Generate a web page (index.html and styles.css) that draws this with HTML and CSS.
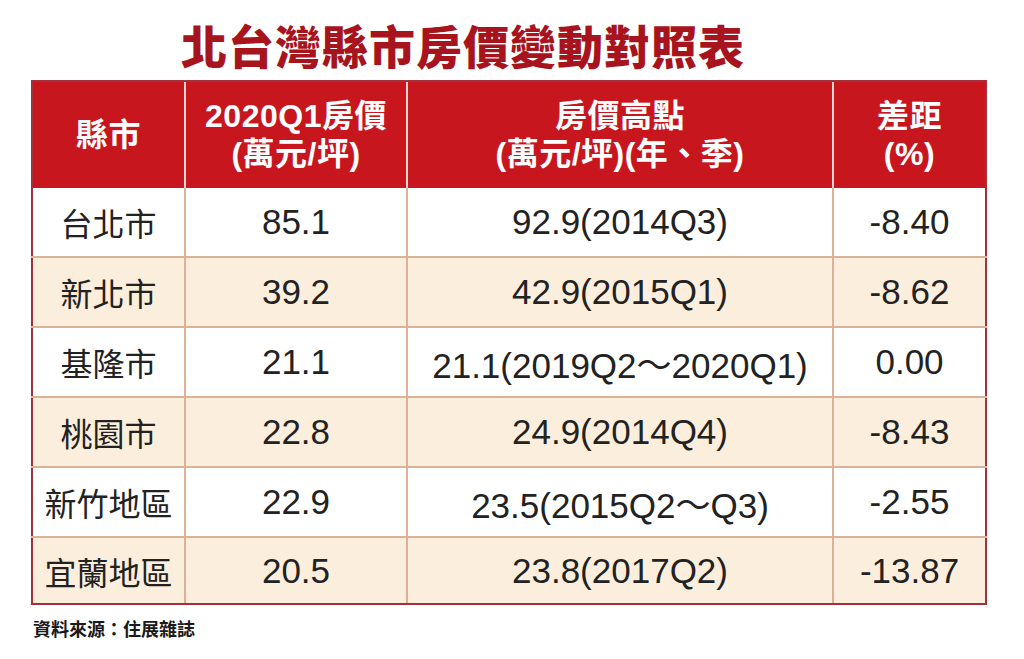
FILE: index.html
```html
<!DOCTYPE html>
<html lang="zh-Hant">
<head>
<meta charset="utf-8">
<title>北台灣縣市房價變動對照表</title>
<link rel="stylesheet" href="styles.css">
</head>
<body>
<div class="page">
  <h1 class="title">北台灣縣市房價變動對照表</h1>
  <table class="tbl">
    <colgroup>
      <col class="c1"><col class="c2"><col class="c3"><col class="c4">
    </colgroup>
    <thead>
      <tr>
        <th>縣市</th>
        <th>2020Q1房價<br>(萬元/坪)</th>
        <th>房價高點<br>(萬元/坪)(年、季)</th>
        <th>差距<br>(%)</th>
      </tr>
    </thead>
    <tbody>
      <tr><td class="city">台北市</td><td>85.1</td><td>92.9(2014Q3)</td><td>-8.40</td></tr>
      <tr class="alt"><td class="city">新北市</td><td>39.2</td><td>42.9(2015Q1)</td><td>-8.62</td></tr>
      <tr><td class="city">基隆市</td><td>21.1</td><td>21.1(2019Q2～2020Q1)</td><td>0.00</td></tr>
      <tr class="alt"><td class="city">桃園市</td><td>22.8</td><td>24.9(2014Q4)</td><td>-8.43</td></tr>
      <tr><td class="city">新竹地區</td><td>22.9</td><td>23.5(2015Q2～Q3)</td><td>-2.55</td></tr>
      <tr class="alt"><td class="city">宜蘭地區</td><td>20.5</td><td>23.8(2017Q2)</td><td>-13.87</td></tr>
    </tbody>
  </table>
  <p class="source">資料來源：住展雜誌</p>
</div>
</body>
</html>
```

FILE: styles.css
```css
html, body {
  margin: 0;
  padding: 0;
  background: #ffffff;
}
.page {
  padding: 0 0 0 31px;
  width: 954px;
  font-family: "Liberation Sans", "Noto Sans CJK TC", sans-serif;
}
.title {
  margin: 0;
  padding: 16px 0 0 150px;
  height: 80px;
  box-sizing: border-box;
  font-family: "Noto Sans CJK TC", sans-serif;
  font-weight: 900;
  font-size: 46px;
  line-height: 56px;
  letter-spacing: 1px;
  color: #a8141d;
}
.tbl {
  width: 954px;
  border-collapse: collapse;
  table-layout: fixed;
  border: 2px solid #a3303a;
}
.c1 { width: 153px; }
.c2 { width: 222px; }
.c3 { width: 426px; }
.c4 { width: 153px; }
.tbl th {
  background: #c8161f;
  color: #ffffff;
  height: 107px;
  padding: 0;
  font-family: "Liberation Sans", "Noto Sans CJK TC", sans-serif;
  font-weight: 700;
  font-size: 32px;
  line-height: 38px;
  letter-spacing: 0.5px;
  text-align: center;
  vertical-align: middle;
  border-left: 2px solid #f1d6d2;
  border-top: 2px solid #a3303a;
  box-sizing: border-box;
}
.tbl th:first-child { border-left: 2px solid #a3303a; }
.tbl td {
  height: 68px;
  padding: 0;
  text-align: center;
  vertical-align: middle;
  color: #222222;
  font-size: 35px;
  border: 2px solid #dcb195;
  border-top: 0;
}
.tbl td:first-child { border-left: 2px solid #a3303a; }
.tbl td:last-child { border-right: 2px solid #a3303a; }
.tbl tbody tr:last-child td { border-bottom: 2px solid #a3303a; height: 65px; }
.tbl td.city {
  font-family: "Noto Sans CJK TC", sans-serif;
  font-size: 32px;
  font-weight: 400;
}
.tbl tr.alt td { background: #fbeedc; }
.source {
  margin: 10px 0 0 2px;
  font-family: "Noto Sans CJK TC", sans-serif;
  font-weight: 700;
  font-size: 18px;
  line-height: 26px;
  color: #1a1a1a;
}
```
